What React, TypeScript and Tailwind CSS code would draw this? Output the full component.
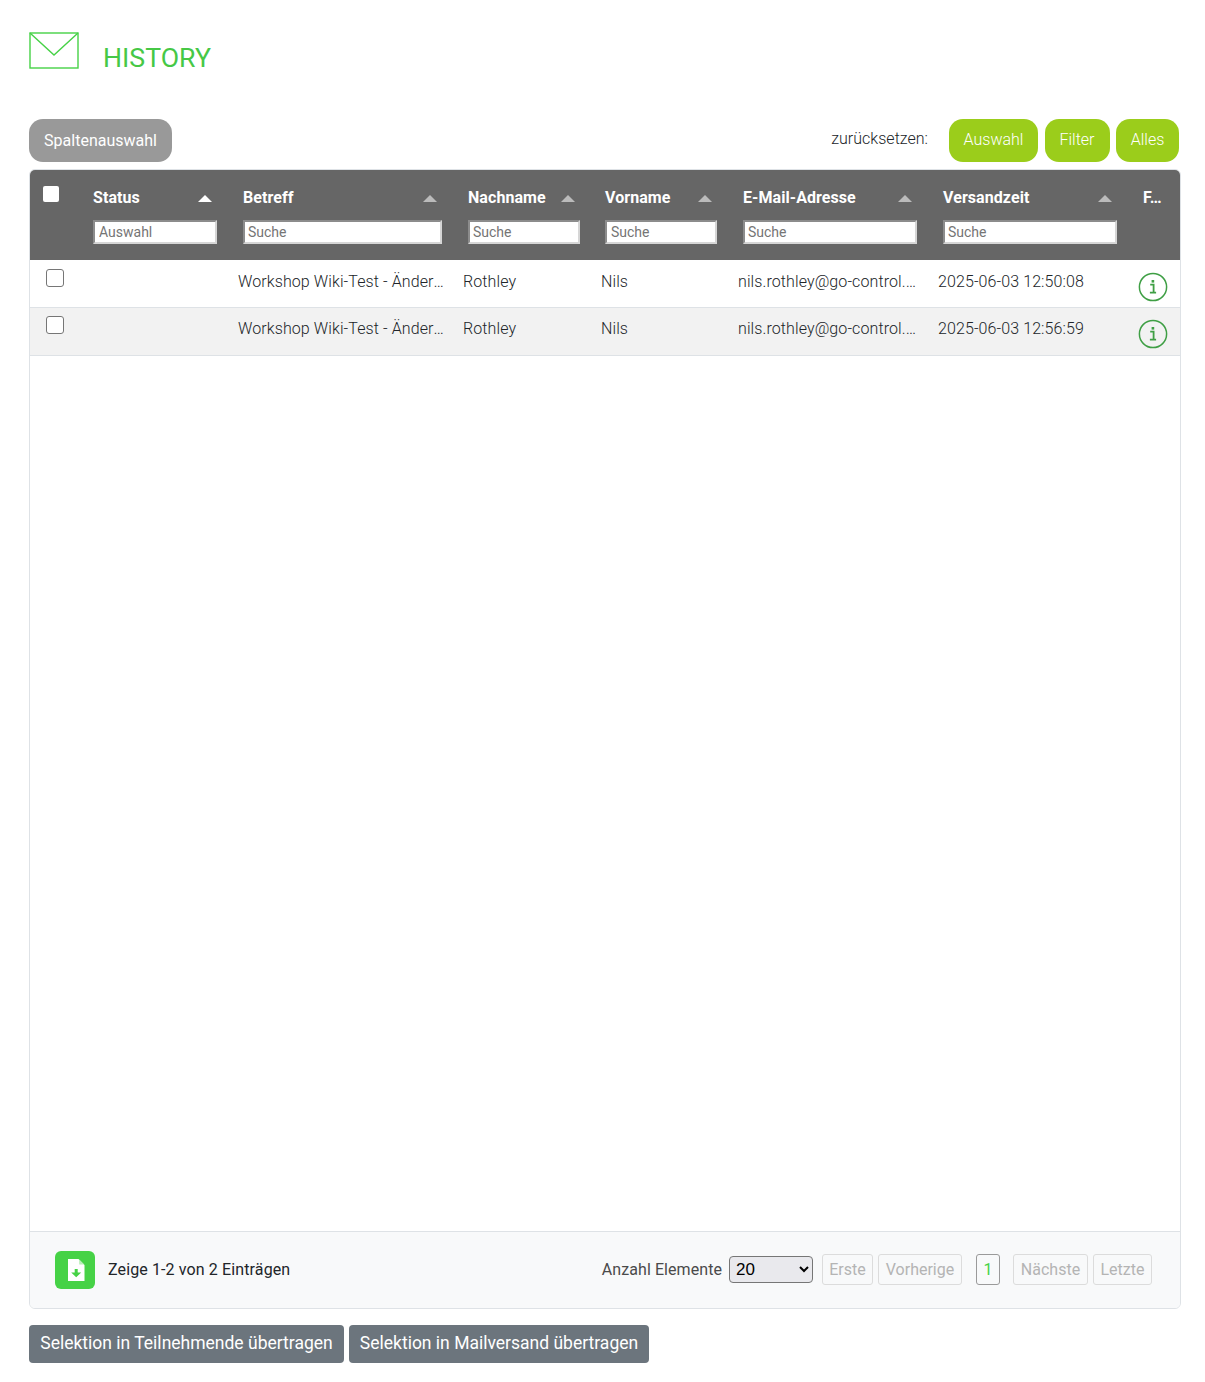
import React from "react";

const columns = [
  { label: "Status", width: "w-[150px]", input: "w-[124px] pl-[4px]", placeholder: "Auswahl", active: true },
  { label: "Betreff", width: "w-[225px]", input: "w-[199px] pl-[3px]", placeholder: "Suche" },
  { label: "Nachname", width: "w-[137px]", input: "w-[112px] pl-[3px]", placeholder: "Suche" },
  { label: "Vorname", width: "w-[138px]", input: "w-[112px] pl-[4px]", placeholder: "Suche" },
  { label: "E-Mail-Adresse", width: "w-[200px]", input: "w-[174px] pl-[3px]", placeholder: "Suche" },
  { label: "Versandzeit", width: "w-[200px]", input: "w-[174px] pl-[3px]", placeholder: "Suche" },
];

const rows = [
  { time: "2025-06-03 12:50:08", shaded: false },
  { time: "2025-06-03 12:56:59", shaded: true },
];

function InfoIcon() {
  return (
    <svg width="30" height="30" viewBox="0 0 30 30" fill="none" aria-hidden="true">
      <circle cx="15" cy="15" r="13.6" stroke="#3f9f45" strokeWidth="1.5" />
      <path d="M12.2 12.6h3.4v7.9M11.9 20.7h6.2" stroke="#3f9f45" strokeWidth="1.8" />
      <rect x="13.6" y="8" width="2.6" height="2.6" fill="#3f9f45" />
    </svg>
  );
}

function Pager({ label, className = "" }: { label: string; className?: string }) {
  return (
    <span className={`mb-[2px] flex h-[31px] items-center justify-center rounded-[3px] border border-[#dcdcdc] pt-px text-[#b4b4b4] ${className}`}>
      {label}
    </span>
  );
}

export default function App() {
  return (
    <div className="min-h-[1382px] bg-white pl-[29px] pr-[24px] pt-[32px] font-['Roboto',sans-serif] text-[16px]">
      <div className="flex h-[87px] items-start">
        <svg width="50" height="37" viewBox="0 0 50 37" fill="none" aria-hidden="true">
          <rect x="1" y="1" width="48" height="35" stroke="#46d246" strokeWidth="1.4" />
          <path d="M1 1l24 22L49 1" stroke="#46d246" strokeWidth="1.4" />
        </svg>
        <h1 className="ml-[24px] mt-[11px] text-[26.7px] font-normal leading-[30px] text-[#46c846]">HISTORY</h1>
      </div>

      <div className="flex h-[50px] items-start justify-between pr-[2px]">
        <button className="h-[43px] w-[143px] rounded-[14px] bg-[#999999] text-[16px] font-normal text-white">
          Spaltenauswahl
        </button>
        <div className="flex items-start">
          <span className="mr-[21px] mt-[10px] font-light leading-[20px] tracking-[0.02px] text-[#212529]">zurücksetzen:</span>
          <button className="h-[43px] w-[89px] rounded-[14px] bg-[#9bcd1b] pb-[2px] font-light text-white">Auswahl</button>
          <button className="ml-[7px] h-[43px] w-[65px] rounded-[14px] bg-[#9bcd1b] pb-[2px] pr-[1px] font-light text-white">Filter</button>
          <button className="ml-[6px] h-[43px] w-[63px] rounded-[14px] bg-[#9bcd1b] pb-[2px] font-light text-white">Alles</button>
        </div>
      </div>

      <div className="flex h-[1140px] flex-col overflow-hidden rounded-[6px] border border-[#dee2e6]">
        <div className="-mx-px -mt-px flex h-[91px] bg-[#666666] text-white">
          <div className="w-[59px] pl-[14px] pt-[17px]">
            <span className="block h-[16px] w-[16px] rounded-[2px] bg-white" />
          </div>
          {columns.map((c) => (
            <div key={c.label} className={`${c.width} pl-[5px] pt-[19px]`}>
              <div className={`flex h-[20px] items-center !pl-0 ${c.input}`}>
                <span className="text-[16px] font-bold leading-[20px] tracking-[0.07px]">{c.label}</span>
                <span
                  className={`ml-auto mr-[5px] h-0 w-0 border-x-[7px] border-b-[7px] border-x-transparent ${c.active ? "border-b-white" : "border-b-[#bbbbbb]"}`}
                />
              </div>
              <input
                placeholder={c.placeholder}
                className={`mt-[12px] block h-[24px] ${c.input} border-2 border-b-[#d6d6d6] border-l-[#8c8c8c] border-r-[#d6d6d6] border-t-[#8c8c8c] bg-white text-[14px] font-normal text-[#333] placeholder:text-[#757575]`}
              />
            </div>
          ))}
          <div className="pl-[5px] pt-[19px] text-[16px] font-bold leading-[20px]">F…</div>
        </div>

        <div className="flex-1">
          {rows.map((r) => (
            <div
              key={r.time}
              className={`flex h-[48px] border-b border-[#dee2e6] font-light tracking-[0.1px] text-[#212529] ${r.shaded ? "bg-[#f2f2f2]" : "bg-white pt-px"}`}
            >
              <div className="w-[58px] pl-[16px] pt-[8px]">
                <span className="block h-[18px] w-[18px] rounded-[3px] border border-[#767676] bg-white" />
              </div>
              <div className="w-[150px]" />
              <div className="w-[225px] truncate pr-[19px] pt-[10px] leading-[22px]">Workshop Wiki-Test - Änderung</div>
              <div className="w-[138px] pt-[10px] leading-[22px]">Rothley</div>
              <div className="w-[137px] pt-[10px] leading-[22px]">Nils</div>
              <div className="w-[200px] truncate pr-[22px] pt-[10px] leading-[22px]">nils.rothley@go-control.de</div>
              <div className="w-[200px] pt-[10px] leading-[22px]">{r.time}</div>
              <div className="pt-[11px]">
                <InfoIcon />
              </div>
            </div>
          ))}
        </div>

        <div className="flex h-[77px] items-center border-t border-[#dee2e6] bg-[#f8f9fa] pl-[25px] pr-[28px]">
          <button className="flex h-[38px] w-[40px] items-center justify-center rounded-[6px] bg-[#46d246] pl-[2px]" aria-label="Download">
            <svg width="18" height="22" viewBox="0 0 18 22" aria-hidden="true">
              <path d="M1 0h10.5L17.5 6v16H1z" fill="#fff" />
              <path d="M12.2 0.5l5 5h-5z" fill="#b8efb8" />
              <path d="M7.7 10h3v3.5h3.5l-5 4.7-5-4.7h3.5z" fill="#46d246" />
            </svg>
          </button>
          <span className="ml-[13px] tracking-[0.12px] text-[#212529]">Zeige 1-2 von 2 Einträgen</span>
          <span className="ml-auto font-normal tracking-[0.07px] text-[#4a4a4a]">Anzahl Elemente</span>
          <select className="mb-[2px] ml-[7px] h-[27px] w-[84px] rounded-[4px] border border-[#767676] bg-[#e9e9ed] pl-[2px] font-['Liberation_Sans',sans-serif] text-[17px] text-black">
            <option>20</option>
          </select>
          <Pager label="Erste" className="ml-[9px] w-[51px]" />
          <Pager label="Vorherige" className="ml-[5px] w-[84px]" />
          <span className="mb-[2px] ml-[14px] flex h-[31px] w-[24px] items-center justify-center rounded-[3px] border border-[#9a9a9a] pt-px text-[#46d246]">1</span>
          <Pager label="Nächste" className="ml-[13px] w-[75px]" />
          <Pager label="Letzte" className="ml-[5px] w-[59px]" />
        </div>
      </div>

      <div className="mt-[16px] flex gap-[5px]">
        <button className="h-[38px] w-[315px] rounded-[4px] bg-[#6c757d] pb-[2px] text-[17.5px] font-normal text-white">
          Selektion in Teilnehmende übertragen
        </button>
        <button className="h-[38px] w-[300px] rounded-[4px] bg-[#6c757d] pb-[2px] text-[17.5px] font-normal text-white">
          Selektion in Mailversand übertragen
        </button>
      </div>
    </div>
  );
}
